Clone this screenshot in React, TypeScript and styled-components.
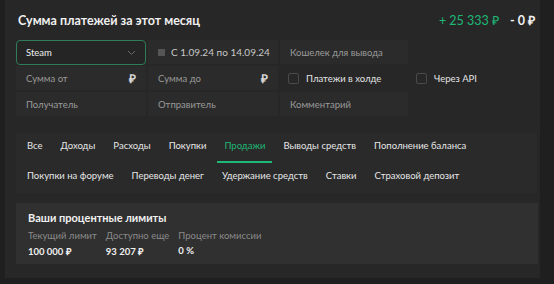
import React from "react";
import styled, { createGlobalStyle } from "styled-components";

const Global = createGlobalStyle`
  html, body { margin: 0; padding: 0; background: #1f1f1f; }
  body { font-family: Lato, "Open Sans", sans-serif; color: #e4e4e4; }
`;

const Page = styled.div`
  padding-left: 5px;
  width: 549px;
  height: 284px;
  box-sizing: border-box;
`;

const Panel = styled.div`
  width: 535px;
  height: 278px;
  background: #272727;
  box-sizing: border-box;
  padding: 9px 3px 0 11px;
  display: flex;
  flex-direction: column;
`;

const Header = styled.div`
  display: flex;
  align-items: center;
  justify-content: space-between;
  height: 22px;
  padding-left: 2px;
  padding-right: 2px;
`;

const Title = styled.div`
  font-size: 12.5px;
  font-weight: 700;
  color: #f0f0f0;
`;

const Totals = styled.div`
  display: flex;
  gap: 11px;
  font-size: 12.5px;
`;

const Amount = styled.span<{ $green?: boolean }>`
  color: ${(p) => (p.$green ? "#1fb877" : "#f0f0f0")};
  font-weight: ${(p) => (p.$green ? 400 : 700)};
`;

const Grid = styled.div`
  display: grid;
  grid-template-columns: 130px 130px 128px 128px;
  grid-auto-rows: 26px;
  column-gap: 2px;
  margin-top: 8px;
`;

const Field = styled.div<{ $active?: boolean; $plain?: boolean; $inset?: number }>`
  display: flex;
  align-items: center;
  gap: 6px;
  padding: 0 9px 0 ${(p) => (p.$inset ?? 9)}px;
  box-sizing: border-box;
  font-size: 9.5px;
  color: ${(p) => (p.$active ? "#f0f0f0" : "#9a9a9a")};
  background: ${(p) => (p.$plain ? "transparent" : p.$active ? "#252525" : "#2b2b2b")};
  border: ${(p) => (p.$active ? "1px solid #2f7c5b" : "1px solid transparent")};
  border-radius: ${(p) => (p.$active ? "4px" : "0")};
  height: ${(p) => (p.$active ? "25px" : "24px")};
  margin-top: 1px;
`;

const Grow = styled.span<{ $bright?: boolean }>`
  flex: 1;
  white-space: nowrap;
  color: ${(p) => (p.$bright ? "#c8c8c8" : "inherit")};
  font-size: ${(p) => (p.$bright ? "10px" : "inherit")};
`;

const Suffix = styled.span`
  color: #d8d8d8;
  font-size: 12px;
  font-weight: 700;
`;

const Square = styled.span`
  flex-shrink: 0;
  width: 7px;
  height: 7px;
  background: #555555;
`;

const Box = styled.span`
  flex-shrink: 0;
  width: 11px;
  height: 11px;
  border: 1px solid #4a4a4a;
  border-radius: 2px;
  box-sizing: border-box;
`;

const CheckLabel = styled.span`
  color: #e4e4e4;
  font-size: 9.5px;
  margin-left: 1px;
  white-space: nowrap;
`;

const Tabs = styled.div`
  margin-top: 16px;
  width: 521px;
  background: #2a2a2a;
  padding: 0 0 0 4px;
  box-sizing: border-box;
`;

const TabRow = styled.div`
  display: flex;
  gap: 4px;
  height: 30px;
  align-items: stretch;
`;

const Tab = styled.div<{ $active?: boolean }>`
  display: flex;
  align-items: center;
  padding: 0 7px 3px;
  font-size: 9.5px;
  white-space: nowrap;
  color: ${(p) => (p.$active ? "#1fb877" : "#e6e6e6")};
  border-bottom: 2px solid ${(p) => (p.$active ? "#1fb877" : "transparent")};
  box-sizing: border-box;
`;

const Limits = styled.div`
  margin-top: 10px;
  width: 522px;
  height: 61px;
  background: #303030;
  box-sizing: border-box;
  padding: 8px 12px;
`;

const LimitsTitle = styled.div`
  font-size: 11px;
  font-weight: 700;
  color: #f0f0f0;
`;

const Stats = styled.div`
  display: flex;
  gap: 9px;
  margin-top: 6px;
`;

const Stat = styled.div`
  display: flex;
  flex-direction: column;
  gap: 4px;
`;

const StatLabel = styled.div`
  font-size: 9.5px;
  color: #8a8a8a;
`;

const StatValue = styled.div`
  font-size: 9.5px;
  font-weight: 700;
  color: #f0f0f0;
`;

const Chevron = () => (
  <svg width="9" height="6" viewBox="0 0 9 6">
    <path d="M1 1l3.5 3.5L8 1" fill="none" stroke="#6a6a6a" strokeWidth="1" />
  </svg>
);

const Check = () => (
  <svg width="7" height="6" viewBox="0 0 7 6">
    <path d="M1 3.5l1.5 1.5L6 1" fill="none" stroke="#5a5a5a" strokeWidth="1" />
  </svg>
);

export default function App() {
  const tabs1 = ["Все", "Доходы", "Расходы", "Покупки", "Продажи", "Выводы средств", "Пополнение баланса"];
  const tabs2 = ["Покупки на форуме", "Переводы денег", "Удержание средств", "Ставки", "Страховой депозит"];
  return (
    <Page>
      <Global />
      <Panel>
        <Header>
          <Title>Сумма платежей за этот месяц</Title>
          <Totals>
            <Amount $green>+ 25 333 ₽</Amount>
            <Amount>- 0 ₽</Amount>
          </Totals>
        </Header>
        <Grid>
          <Field $active>
            <Grow>Steam</Grow>
            <Chevron />
          </Field>
          <Field>
            <Square />
            <Grow $bright>С 1.09.24 по 14.09.24</Grow>
            <Check />
          </Field>
          <Field>
            <Grow>Кошелек для вывода</Grow>
          </Field>
          <div />
          <Field>
            <Grow>Сумма от</Grow>
            <Suffix>₽</Suffix>
          </Field>
          <Field>
            <Grow>Сумма до</Grow>
            <Suffix>₽</Suffix>
          </Field>
          <Field $plain $inset={7}>
            <Box />
            <CheckLabel>Платежи в холде</CheckLabel>
          </Field>
          <Field $plain $inset={5}>
            <Box />
            <CheckLabel>Через API</CheckLabel>
          </Field>
          <Field>
            <Grow>Получатель</Grow>
          </Field>
          <Field>
            <Grow>Отправитель</Grow>
          </Field>
          <Field>
            <Grow>Комментарий</Grow>
          </Field>
        </Grid>
        <Tabs>
          <TabRow>
            {tabs1.map((t) => (
              <Tab key={t} $active={t === "Продажи"}>{t}</Tab>
            ))}
          </TabRow>
          <TabRow>
            {tabs2.map((t) => (
              <Tab key={t}>{t}</Tab>
            ))}
          </TabRow>
        </Tabs>
        <Limits>
          <LimitsTitle>Ваши процентные лимиты</LimitsTitle>
          <Stats>
            <Stat>
              <StatLabel>Текущий лимит</StatLabel>
              <StatValue>100 000 ₽</StatValue>
            </Stat>
            <Stat>
              <StatLabel>Доступно еще</StatLabel>
              <StatValue>93 207 ₽</StatValue>
            </Stat>
            <Stat>
              <StatLabel>Процент комиссии</StatLabel>
              <StatValue>0 %</StatValue>
            </Stat>
          </Stats>
        </Limits>
      </Panel>
    </Page>
  );
}
